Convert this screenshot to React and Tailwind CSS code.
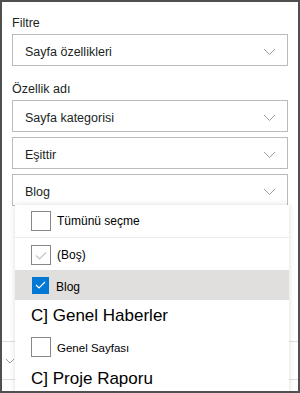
import React from "react";

const Chevron = () => (
  <svg width="13" height="8" viewBox="0 0 13 8" className="shrink-0">
    <path d="M1 1l5.5 5.5L12 1" fill="none" stroke="#a19f9d" strokeWidth="1" />
  </svg>
);

const Select = ({ value, className = "" }) => (
  <div
    className={
      "flex h-[32px] items-center justify-between border border-[#bdbbb9] pl-[12px] pr-[11px] pt-[4px] " +
      className
    }
  >
    <span className="text-[12.5px] text-[#201f1e]">{value}</span>
    <Chevron />
  </div>
);

const Box = ({ state }) => {
  if (state === "checked") {
    return (
      <span className="flex h-[17px] w-[17px] shrink-0 items-center justify-center bg-[#0078d4]">
        <svg width="11" height="8" viewBox="0 0 11 8">
          <path d="M1 4l3 3 6-6" fill="none" stroke="#fff" strokeWidth="1.2" />
        </svg>
      </span>
    );
  }
  return (
    <span className="flex h-[20px] w-[20px] shrink-0 items-center justify-center border border-[#8a8886] bg-white">
      {state === "ghost" ? (
        <svg width="12" height="9" viewBox="0 0 12 9">
          <path d="M1 4.5l3.5 3.5L11 1.5" fill="none" stroke="#c8c6c4" strokeWidth="1.2" />
        </svg>
      ) : null}
    </span>
  );
};

export default function App() {
  return (
    <div
      className="relative h-[393px] w-[300px] overflow-hidden border-2 border-[#505050] bg-white"
      style={{ fontFamily: '"Liberation Sans", Arial, sans-serif' }}
    >
      <div className="px-[10px] pt-[13px]">
        <div className="mb-[3px] text-[12.5px] leading-[16px] text-[#201f1e]">Filtre</div>
        <Select value="Sayfa özellikleri" />
        <div className="mb-[3px] mt-[15px] text-[12.5px] leading-[16px] text-[#201f1e]">Özellik adı</div>
        <Select value="Sayfa kategorisi" />
        <Select value="Eşittir" className="mt-[5px]" />
        <Select value="Blog" className="mt-[5px]" />
      </div>

      {/* content behind the open list */}
      <div className="mt-[135px] border-t border-[#e1dfdd]">
        <div className="flex h-[37px] items-center pl-[3px] pt-[1px]">
          <svg width="10" height="7" viewBox="0 0 10 7">
            <path d="M1 1l4 4 4-4" fill="none" stroke="#a19f9d" strokeWidth="1" />
          </svg>
        </div>
        <div className="border-t border-[#e1dfdd]" />
      </div>

      <div className="absolute left-[13px] top-[203px] w-[274px] bg-white shadow-[0_0_6px_rgba(0,0,0,0.14)]">
        <div className="flex h-[33px] items-center gap-[6px] border-b border-[#edebe9] pl-[16px]">
          <Box />
          <span className="text-[12px] text-black">Tümünü seçme</span>
        </div>
        <div className="flex h-[32px] items-center gap-[6px] pl-[16px] pt-[2px]">
          <Box state="ghost" />
          <span className="text-[12px] text-black">(Boş)</span>
        </div>
        <div className="flex h-[30px] items-center gap-[7px] bg-[#e1dfdd] pl-[17px]">
          <Box state="checked" />
          <span className="pt-[3px] text-[12px] text-black">Blog</span>
        </div>
        <div className="flex h-[31px] items-center pl-[16px]">
          <span className="text-[17px] text-black">C] Genel Haberler</span>
        </div>
        <div className="flex h-[31px] items-center gap-[6px] pl-[16px]">
          <Box />
          <span className="pt-[5px] text-[11.5px] text-black">Genel Sayfası</span>
        </div>
        <div className="flex h-[33px] items-center pl-[16px]">
          <span className="text-[17px] text-black">C] Proje Raporu</span>
        </div>
      </div>
    </div>
  );
}
